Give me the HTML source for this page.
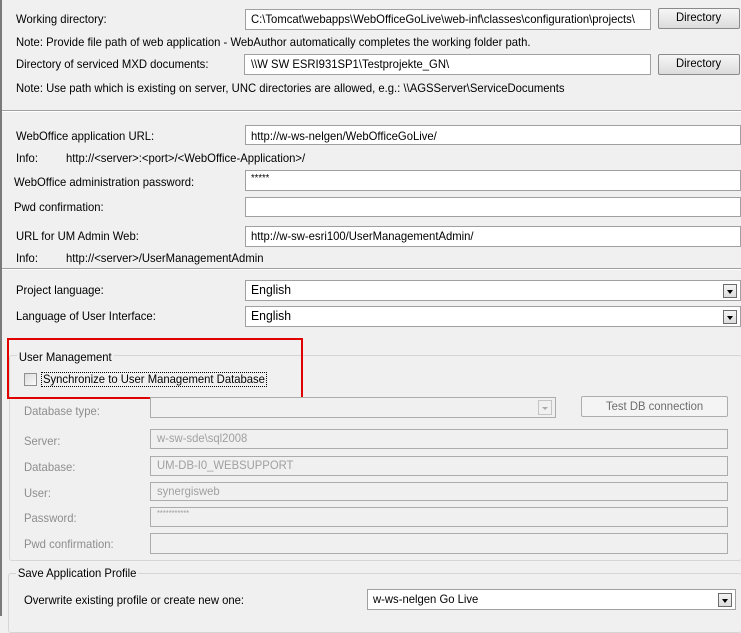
<!DOCTYPE html>
<html><head><style>
body{margin:0;width:741px;height:616px;background:#f0f0f0;position:relative;overflow:hidden;font-family:"Liberation Sans",Arial,sans-serif;font-size:12px;color:#000}
.a{position:absolute}
.t{position:absolute;white-space:nowrap;transform:scaleX(0.94);transform-origin:0 50%;line-height:14px}
.g{color:#8d8d8d}
.in{position:absolute;background:#fff;border:1px solid #a0a0a0;box-sizing:border-box}
.dis{position:absolute;background:#f0f0f0;border:1px solid #acacac;box-sizing:border-box}
.btn{position:absolute;box-sizing:border-box;border:1px solid #8a8a8a;border-radius:2px;background:linear-gradient(#f6f6f6,#dcdcdc)}
.hr{position:absolute;height:0;border-top:1px solid #a0a0a0;border-bottom:1px solid #fff}
.grp{position:absolute;border:1px solid #d5d5d5;border-radius:3px;box-sizing:border-box}
.dd{position:absolute;width:14px;height:14px;border:1px solid #6a6a6a;box-sizing:border-box;background:linear-gradient(#f4f4f4,#dcdcdc)}
.dd:after{content:"";position:absolute;left:3px;top:5px;border-left:3px solid transparent;border-right:3px solid transparent;border-top:4px solid #000}
</style></head><body>
<div class="a" style="left:0;top:0;width:2px;height:616px;background:#7a7a7a"></div>

<div class="t" style="left:16px;top:12px">Working directory:</div>
<div class="in" style="left:245px;top:9px;width:406px;height:21px"></div>
<div class="t" style="left:251px;top:12px">C:\Tomcat\webapps\WebOfficeGoLive\web-inf\classes\configuration\projects\</div>
<div class="btn" style="left:658px;top:8px;width:82px;height:21px"></div>
<div class="t" style="left:676px;top:10px">Directory</div>
<div class="t" style="left:16px;top:35px">Note: Provide file path of web application - WebAuthor automatically completes the working folder path.</div>

<div class="t" style="left:16px;top:57px">Directory of serviced MXD documents:</div>
<div class="in" style="left:244px;top:54px;width:407px;height:21px"></div>
<div class="t" style="left:251px;top:57px">\\W SW ESRI931SP1\Testprojekte_GN\</div>
<div class="btn" style="left:658px;top:54px;width:82px;height:21px"></div>
<div class="t" style="left:676px;top:56px">Directory</div>
<div class="t" style="left:16px;top:81px">Note: Use path which is existing on server, UNC directories are allowed, e.g.: \\AGSServer\ServiceDocuments</div>

<div class="hr" style="left:2px;top:110px;width:739px"></div>

<div class="t" style="left:16px;top:129px">WebOffice application URL:</div>
<div class="in" style="left:245px;top:125px;width:496px;height:20px"></div>
<div class="t" style="left:251px;top:129px">http://w-ws-nelgen/WebOfficeGoLive/</div>
<div class="t" style="left:16px;top:151px">Info:</div>
<div class="t" style="left:66px;top:151px">http://&lt;server&gt;:&lt;port&gt;/&lt;WebOffice-Application&gt;/</div>
<div class="t" style="left:14px;top:175px">WebOffice administration password:</div>
<div class="in" style="left:245px;top:170px;width:496px;height:21px"></div>
<div class="t" style="left:251px;top:172px;font-size:10px">*****</div>
<div class="t" style="left:14px;top:200px">Pwd confirmation:</div>
<div class="in" style="left:245px;top:197px;width:496px;height:20px"></div>
<div class="t" style="left:16px;top:229px">URL for UM Admin Web:</div>
<div class="in" style="left:245px;top:226px;width:496px;height:21px"></div>
<div class="t" style="left:251px;top:229px">http://w-sw-esri100/UserManagementAdmin/</div>
<div class="t" style="left:16px;top:251px">Info:</div>
<div class="t" style="left:66px;top:251px">http://&lt;server&gt;/UserManagementAdmin</div>

<div class="hr" style="left:2px;top:268px;width:739px"></div>

<div class="t" style="left:16px;top:283px">Project language:</div>
<div class="in" style="left:245px;top:280px;width:496px;height:21px"></div>
<div class="t" style="left:251px;top:283px;font-size:13px">English</div>
<div class="dd" style="left:723px;top:284px"></div>
<div class="t" style="left:16px;top:309px">Language of User Interface:</div>
<div class="in" style="left:245px;top:306px;width:496px;height:21px"></div>
<div class="t" style="left:251px;top:309px;font-size:13px">English</div>
<div class="dd" style="left:723px;top:310px"></div>

<div class="grp" style="left:9px;top:355px;width:733px;height:206px"></div>
<div class="t" style="left:17px;top:350px;background:#f0f0f0;padding:0 2px">User Management</div>
<div class="a" style="left:7px;top:338px;width:296px;height:61px;border:2px solid #e00000;box-sizing:border-box"></div>
<div class="a" style="left:24px;top:373px;width:13px;height:13px;border:1px solid #8f8f8f;box-sizing:border-box;background:linear-gradient(135deg,#dcdcdc,#fafafa)"></div>
<div class="a" style="left:41px;top:372px;width:226px;height:15px;border:1px dotted #000;box-sizing:border-box"></div>
<div class="t" style="left:43px;top:372px">Synchronize to User Management Database</div>

<div class="t g" style="left:24px;top:404px">Database type:</div>
<div class="dis" style="left:150px;top:397px;width:406px;height:21px"></div>
<div class="a" style="left:538px;top:400px;width:14px;height:15px;border:1px solid #c4c4c4;box-sizing:border-box"><div style="position:absolute;left:3px;top:6px;border-left:3px solid transparent;border-right:3px solid transparent;border-top:3px solid #aaa"></div></div>
<div class="btn" style="left:581px;top:396px;width:147px;height:21px;border-color:#adadad;background:#f4f4f4"></div>
<div class="t g" style="left:606px;top:399px;color:#6d6d6d">Test DB connection</div>

<div class="t g" style="left:24px;top:434px">Server:</div>
<div class="dis" style="left:150px;top:429px;width:578px;height:20px"></div>
<div class="t g" style="left:157px;top:431px;color:#a0a0a0">w-sw-sde\sql2008</div>
<div class="t g" style="left:24px;top:460px">Database:</div>
<div class="dis" style="left:150px;top:456px;width:578px;height:20px"></div>
<div class="t g" style="left:157px;top:458px;color:#a0a0a0">UM-DB-I0_WEBSUPPORT</div>
<div class="t g" style="left:24px;top:486px">User:</div>
<div class="dis" style="left:150px;top:482px;width:578px;height:19px"></div>
<div class="t g" style="left:157px;top:484px;color:#a0a0a0">synergisweb</div>
<div class="t g" style="left:24px;top:511px">Password:</div>
<div class="dis" style="left:150px;top:507px;width:578px;height:20px"></div>
<div class="t g" style="left:157px;top:507px;font-size:8px;color:#a0a0a0">***********</div>
<div class="t g" style="left:24px;top:537px">Pwd confirmation:</div>
<div class="dis" style="left:150px;top:533px;width:578px;height:21px"></div>

<div class="grp" style="left:8px;top:573px;width:734px;height:60px"></div>
<div class="t" style="left:16px;top:566px;background:#f0f0f0;padding:0 2px">Save Application Profile</div>
<div class="t" style="left:24px;top:593px">Overwrite existing profile or create new one:</div>
<div class="in" style="left:367px;top:589px;width:369px;height:21px"></div>
<div class="t" style="left:373px;top:592px">w-ws-nelgen Go Live</div>
<div class="dd" style="left:718px;top:593px"></div>
</body></html>
